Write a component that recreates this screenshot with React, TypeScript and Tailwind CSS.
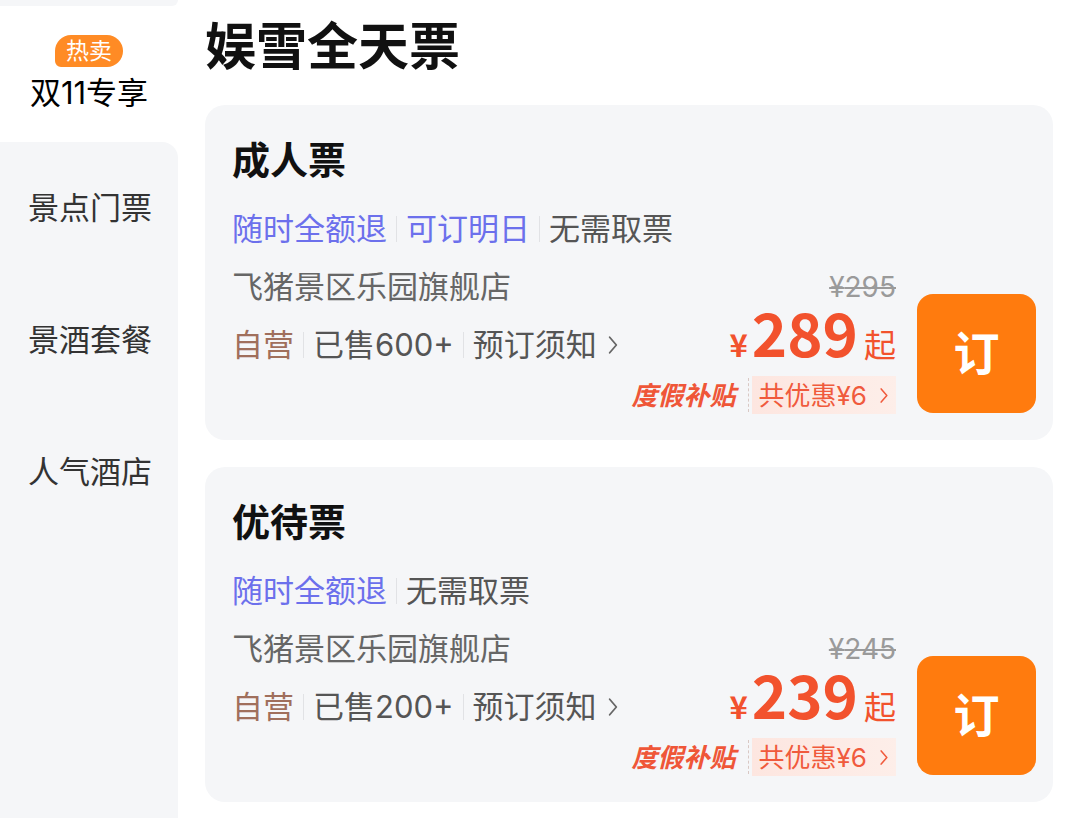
import React from "react";

const font = { fontFamily: '"Inter", "Noto Sans CJK SC", "Noto Sans", sans-serif' };
const cjk = { fontFamily: '"Noto Sans CJK SC", "Noto Sans", sans-serif' };

type Ticket = {
  name: string;
  tags: { text: string; blue: boolean }[];
  sold: string;
  oldPrice: string;
  price: string;
};

const tickets: Ticket[] = [
  {
    name: "成人票",
    tags: [
      { text: "随时全额退", blue: true },
      { text: "可订明日", blue: true },
      { text: "无需取票", blue: false },
    ],
    sold: "已售600+",
    oldPrice: "295",
    price: "289",
  },
  {
    name: "优待票",
    tags: [
      { text: "随时全额退", blue: true },
      { text: "无需取票", blue: false },
    ],
    sold: "已售200+",
    oldPrice: "245",
    price: "239",
  },
];

function Chevron({ className }: { className?: string }) {
  return (
    <svg viewBox="0 0 10 18" className={className} fill="none" stroke="currentColor" strokeWidth="1.6" strokeLinecap="round" strokeLinejoin="round">
      <path d="M2 2l6 7-6 7" />
    </svg>
  );
}

function Sep() {
  return <span className="mx-[9px] h-[26px] w-px bg-[#e1e2e5]" />;
}

function TicketCard({ t }: { t: Ticket }) {
  return (
    <div className="flex flex-col rounded-[20px] bg-[#f5f6f8] pb-[26px] pl-[27px] pr-[17px] pt-[29px]">
      <div className="text-[38px] font-semibold leading-[52px] text-[#111]">{t.name}</div>
      <div className="mt-[14px] flex h-[58px] items-center text-[31px]">
        {t.tags.map((tag, i) => (
          <React.Fragment key={tag.text}>
            {i > 0 && <Sep />}
            <span className={tag.blue ? "text-[#6c70ec]" : "text-[#555]"}>{tag.text}</span>
          </React.Fragment>
        ))}
      </div>
      <div className="flex items-end justify-between">
        <div className="flex flex-col self-start text-[31px]">
          <div className="flex h-[58px] items-center text-[#666]">飞猪景区乐园旗舰店</div>
          <div className="flex h-[58px] items-center text-[#555]">
            <span className="text-[#a06f5c]">自营</span>
            <Sep />
            <span>{t.sold}</span>
            <Sep />
            <span>预订须知</span>
            <Chevron className="ml-[10px] h-[20px] w-[12px] text-[#666]" />
          </div>
        </div>
        <div className="flex items-end">
          <div className="flex flex-col items-end">
            <div className="flex h-[43px] items-end text-[28px] leading-none text-[#9a9a9a] line-through decoration-[2px]">¥{t.oldPrice}</div>
            <div className="flex h-[75px] items-start">
              <div className="flex items-baseline leading-none text-[#f2522d]" style={cjk}>
                <span className="text-[31px] font-semibold">¥</span>
                <span className="ml-[4px] text-[60px] font-bold">{t.price}</span>
                <span className="ml-[6px] text-[32px]">起</span>
              </div>
            </div>
            <div className="flex h-[38px] items-center text-[26px]">
              <span className="font-bold italic text-[#ef5638]">度假补贴</span>
              <span className="ml-[12px] mr-[3px] h-[34px] border-l border-dashed border-[#d9c8c4]" />
              <span className="flex h-[38px] items-center bg-gradient-to-r from-[#fde6e0] to-[#fdeee9] pl-[7px] pr-[7px] text-[#f05a3c]">
                共优惠¥6
                <Chevron className="ml-[12px] h-[17px] w-[10px]" />
              </span>
            </div>
          </div>
          <button className="mb-px ml-[21px] flex h-[119px] w-[119px] items-center justify-center rounded-[16px] bg-[#ff7b0e] text-[46px] font-bold text-white">
            订
          </button>
        </div>
      </div>
    </div>
  );
}

export default function App() {
  const items = ["景点门票", "景酒套餐", "人气酒店"];
  return (
    <div className="flex h-[818px] w-[1080px] overflow-hidden bg-white" style={font}>
      <div className="flex w-[178px] flex-col bg-white">
        <div className="h-[6px] rounded-br-[16px] bg-[#f5f6f8]" />
        <div className="flex h-[136px] flex-col items-center justify-center bg-white">
          <span className="rounded-[16px] rounded-bl-[6px] bg-[#ff8b25] px-[11px] text-[23px] leading-[32px] text-white">热卖</span>
          <span className="mt-[6px] text-[31px] leading-[40px] text-black">双11专享</span>
        </div>
        <div className="flex flex-1 flex-col rounded-tr-[16px] bg-[#f5f6f8]">
          {items.map((it) => (
            <div key={it} className="flex h-[132px] items-center pl-[28px] text-[31px] text-[#333]">
              {it}
            </div>
          ))}
        </div>
      </div>
      <div className="flex flex-1 flex-col px-[27px]">
        <div className="text-[51px] font-semibold leading-[94px] text-[#111]">娱雪全天票</div>
        <div className="mt-[11px] flex flex-col gap-[27px]">
          {tickets.map((t) => (
            <TicketCard key={t.name} t={t} />
          ))}
        </div>
      </div>
    </div>
  );
}
